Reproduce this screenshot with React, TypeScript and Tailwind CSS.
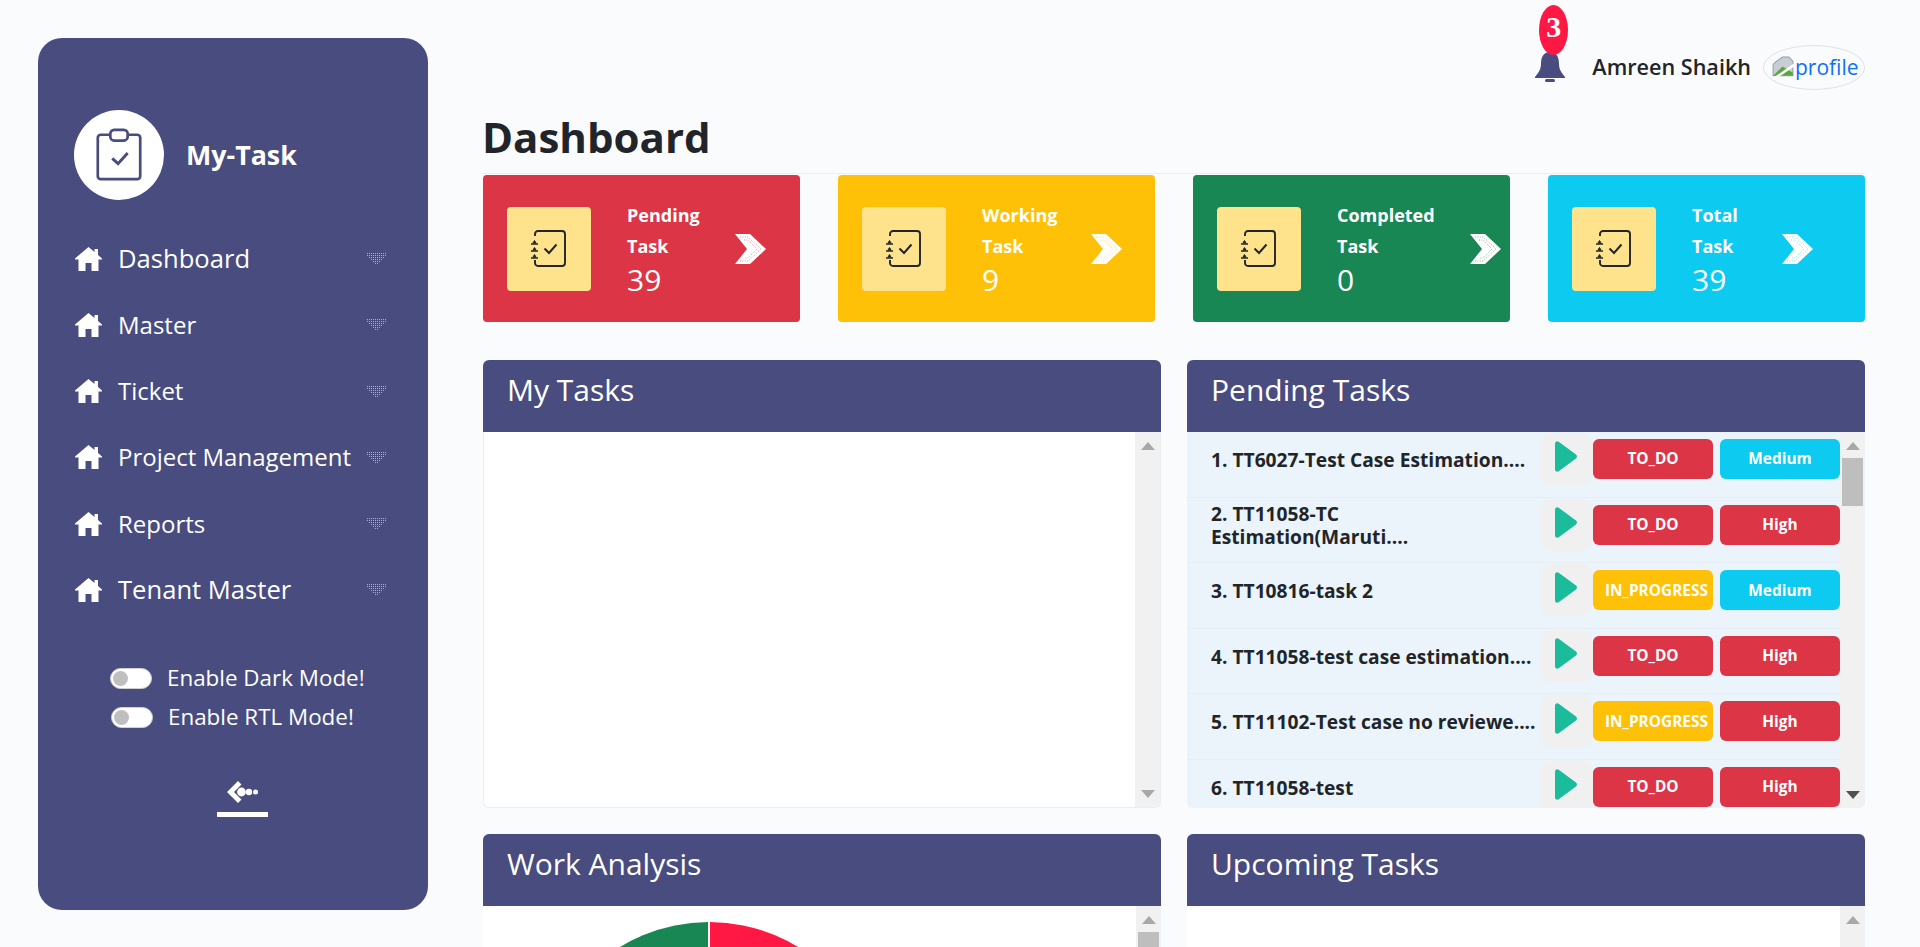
const navItems = [
  { name: 'Dashboard', size: 'text-[25.6px]' },
  { name: 'Master', size: 'text-[24px]' },
  { name: 'Ticket', size: 'text-[24px]' },
  { name: 'Project Management', size: 'text-[24px]' },
  { name: 'Reports', size: 'text-[24px]' },
  { name: 'Tenant Master', size: 'text-[25.6px]' },
]

const statCards = [
  { label: 'Pending', sub: 'Task', count: '39', bg: 'bg-[#dc3545]', hatch: 'text-[#dc3545]', textW: 'w-[108px]' },
  { label: 'Working', sub: 'Task', count: '9', bg: 'bg-[#ffc107]', hatch: 'text-[#ffc107]', textW: 'w-[109px]' },
  { label: 'Completed', sub: 'Task', count: '0', bg: 'bg-[#198754]', hatch: 'text-[#198754]', textW: 'w-[133px]' },
  { label: 'Total', sub: 'Task', count: '39', bg: 'bg-[#0dcaf0]', hatch: 'text-[#0dcaf0]', textW: 'w-[90px]' },
]

const tasks = [
  { title: '1. TT6027-Test Case Estimation....', status: 'TO_DO', priority: 'Medium' },
  { title: '2. TT11058-TC Estimation(Maruti....', status: 'TO_DO', priority: 'High' },
  { title: '3. TT10816-task 2', status: 'IN_PROGRESS', priority: 'Medium' },
  { title: '4. TT11058-test case estimation....', status: 'TO_DO', priority: 'High' },
  { title: '5. TT11102-Test case no reviewe....', status: 'IN_PROGRESS', priority: 'High' },
  { title: '6. TT11058-test', status: 'TO_DO', priority: 'High' },
]

function HomeIcon() {
  return (
    <svg viewBox="0 0 27 24" className="w-[27px] h-[24px] shrink-0" fill="white">
      <path d="M13.5 0 L19.5 5 V2 H23 V8 L27 11.5 V12.5 H23.5 V24 H16.5 V16 H10.5 V24 H3.5 V12.5 H0 V11.5 Z" />
    </svg>
  )
}

function DotCaret() {
  return (
    <svg viewBox="0 0 19 11" className="w-[19px] h-[11px] shrink-0" fill="white" fillOpacity="0.55" shapeRendering="crispEdges">
      {[0, 1, 2, 3, 4, 5].map(row =>
        Array.from({ length: row < 2 ? 10 : 10 - (row - 1) * 2 }).map((_, i) => (
          <rect key={`${row}-${i}`} x={(row < 2 ? 0 : (row - 1) * 2) + i * 2} y={row * 2} width="1" height="1" />
        ))
      )}
    </svg>
  )
}

function Toggle({ label, className }: { label: string; className: string }) {
  return (
    <div className={`flex items-center gap-[15px] ${className}`}>
      <span className="w-[42px] h-[21px] rounded-full bg-white border border-[#d0d0d0] flex items-center pl-[2px]">
        <span className="w-[15px] h-[15px] rounded-full bg-[#bfbfbf]" />
      </span>
      <span className="text-[22.4px] leading-[32px] text-white whitespace-nowrap">{label}</span>
    </div>
  )
}

function Sidebar() {
  return (
    <aside className="w-[390px] h-[872px] shrink-0 rounded-[24px] bg-[#484c7f] pl-[36px] pr-[42px] pt-[72px] flex flex-col">
      <div className="flex items-center gap-[22px]">
        <div className="w-[90px] h-[90px] rounded-full bg-white flex items-center justify-center">
          <svg viewBox="0 0 48 56" className="w-[48px] h-[54px]" fill="none" stroke="#484c7f" strokeWidth="2.8">
            <path d="M14 7 H5 A3 3 0 0 0 2 10 V50 A3 3 0 0 0 5 53 H43 A3 3 0 0 0 46 50 V10 A3 3 0 0 0 43 7 H34" />
            <rect x="15" y="2" width="18" height="11" rx="4" />
            <path d="M17 31.5 L23 37 L33 26" strokeWidth="3" />
          </svg>
        </div>
        <span className="text-[26.8px] font-bold text-white">My-Task</span>
      </div>

      <nav className="mt-[25.7px] flex flex-col">
        {navItems.map(item => (
          <div key={item.name} className="h-[66.2px] flex items-center gap-[16px] pl-[1px]">
            <HomeIcon />
            <span className={`${item.size} text-white flex-1 whitespace-nowrap`}>{item.name}</span>
            <DotCaret />
          </div>
        ))}
      </nav>

      <div className="mt-[36px] flex flex-col">
        <Toggle label="Enable Dark Mode!" className="ml-[36px] h-[39px]" />
        <Toggle label="Enable RTL Mode!" className="ml-[37px] h-[39px]" />
      </div>

      <div className="mt-[44px] ml-[143px] w-[51px] flex flex-col items-center">
        <svg viewBox="0 0 32 22" className="w-[32px] h-[22px]" fill="white">
          <path d="M11 0 L14.5 3.5 L7 11 L14.5 18.5 L11 22 L0 11 Z" />
          <circle cx="14.5" cy="11" r="4.4" />
          <circle cx="22" cy="11" r="3.2" />
          <circle cx="28.5" cy="11" r="2.5" />
        </svg>
        <div className="w-[51px] h-[5px] bg-white mt-[9px]" />
      </div>
    </aside>
  )
}

function TopBar() {
  return (
    <div className="h-[110px] flex justify-end items-start">
      <div className="relative w-[30px] h-[30px] mt-[52px] mr-[27px]">
        <svg viewBox="0 0 30 30" className="w-[30px] h-[30px]" fill="#484c7f">
          <path d="M15 0 C22 0 24 6 24 12 C24 18 27 21 30 25 V26 H0 V25 C3 21 6 18 6 12 C6 6 8 0 15 0 Z" />
          <rect x="10" y="27" width="10" height="3" rx="1.5" />
        </svg>
        <span className="absolute -top-[47px] left-[4px] w-[29px] h-[50px] pb-[6px] rounded-[50%] bg-[#ff1843] flex items-center justify-center text-white font-bold text-[30px] leading-none font-['Liberation_Serif',serif]">
          3
        </span>
      </div>
      <span className="text-[21.6px] font-semibold text-[#212529] mt-[47px] leading-[40px] whitespace-nowrap">Amreen Shaikh</span>
      <div className="ml-[12px] mt-[45px] w-[102px] h-[45px] rounded-[50%] border border-[#dfe3e8] flex items-center pl-[6px] overflow-hidden">
        <svg viewBox="0 0 24 24" className="w-[25px] h-[25px] shrink-0">
          <path d="M5 7 L12 2 H18 L22 6 V20 H3 V9 Z" fill="#c8ced6" stroke="#9aa0a6" strokeWidth="1" />
          <path d="M3 20 L12 11 L22 17 V20 Z" fill="#57a83b" />
          <path d="M2 24 L24 9" stroke="white" strokeWidth="2.5" />
        </svg>
        <span className="text-[21px] text-[#0d6efd] leading-none whitespace-nowrap">profile</span>
      </div>
    </div>
  )
}

function NotebookIcon() {
  return (
    <svg viewBox="0 0 35 37" className="w-[35px] h-[37px] -ml-[2px]" fill="none" stroke="#212529" strokeWidth="1.9">
      <path d="M4 6 V4 A3 3 0 0 1 7 1 H31 A3 3 0 0 1 34 4 V33 A3 3 0 0 1 31 36 H7 A3 3 0 0 1 4 33 V30" />
      <path d="M0 14 H7 M0 21 H7 M0 28 H7" strokeWidth="1.6" />
      <path d="M2 13 L3.5 10.5 L5 13 Z M2 20 L3.5 17.5 L5 20 Z M2 27 L3.5 24.5 L5 27 Z" fill="#212529" strokeWidth="1" />
      <path d="M13.5 18.5 L18 23 L25.5 14.5" strokeWidth="2" />
    </svg>
  )
}

function Chevron({ hatch }: { hatch: string }) {
  return (
    <svg viewBox="0 0 31 30" className={`w-[31px] h-[30px] shrink-0 ${hatch}`}>
      <path d="M0 0 H15 L31 15 L15 30 H0 L12 15 Z" fill="white" />
      <path d="M5 3 H13 L26 15 L13 27 H5 M9 6 H13 L22 15 L13 24 H9" fill="none" stroke="currentColor" strokeOpacity="0.7" strokeWidth="0.8" strokeDasharray="1 1.4" />
    </svg>
  )
}

function StatCard({ label, sub, count, bg, hatch, textW }: (typeof statCards)[number]) {
  return (
    <div className={`h-[147px] rounded-[4px] ${bg} pl-[24px] flex items-center`}>
      <div className="w-[84px] h-[84px] rounded-[4px] bg-[#ffe28c] flex items-center justify-center shrink-0">
        <NotebookIcon />
      </div>
      <div className={`ml-[36px] ${textW} text-white shrink-0`}>
        <div className="text-[18px] font-bold leading-[31px]">{label}</div>
        <div className="text-[18px] font-bold leading-[31px]">{sub}</div>
        <div className="text-[30px] leading-[36px]">{count}</div>
      </div>
      <Chevron hatch={hatch} />
    </div>
  )
}

function ScrollTrack({ thumb, down, downColor }: { thumb?: boolean; down?: boolean; downColor?: string }) {
  return (
    <div className="w-[25px] shrink-0 bg-[#f1f1f1] flex flex-col items-center">
      <svg viewBox="0 0 14 8" className="w-[14px] h-[8px] mt-[10px] shrink-0" fill="#a8a8a8">
        <path d="M7 0 L14 8 H0 Z" />
      </svg>
      {thumb && <div className="w-[21px] h-[48px] bg-[#bebebe] mt-[8px] shrink-0" />}
      <div className="flex-1" />
      {down && (
        <svg viewBox="0 0 14 8" className="w-[14px] h-[8px] mb-[9px] shrink-0" fill={downColor ?? '#a8a8a8'}>
          <path d="M0 0 H14 L7 8 Z" />
        </svg>
      )}
    </div>
  )
}

function PanelHead({ title }: { title: string }) {
  return (
    <div className="h-[72px] rounded-t-[6px] bg-[#484c7f] px-[24px] pt-[12px]">
      <h2 className="text-[30px] leading-[36px] text-white">{title}</h2>
    </div>
  )
}

function Badge({ text }: { text: string }) {
  const color =
    text === 'IN_PROGRESS' ? 'bg-[#ffc107] pl-[12px] justify-start' :
    text === 'Medium' ? 'bg-[#0dcaf0] justify-center' :
    'bg-[#dc3545] justify-center'
  return (
    <span className={`w-[120px] h-[40px] rounded-[6px] flex items-center text-white text-[15.4px] font-bold whitespace-nowrap ${color}`}>
      {text}
    </span>
  )
}

function TaskRow({ title, status, priority }: (typeof tasks)[number]) {
  return (
    <div className="h-[65.6px] shrink-0 flex items-center border-b border-[#e6edf3]">
      <div className="w-[353px] pl-[24px] pr-[3px] pb-[10px] text-[19.2px] leading-[23px] font-bold text-[#212529]">{title}</div>
      <div className="w-[53px] h-[52px] rounded-[12px] bg-[#f0f0f0] flex items-start justify-center pt-[8px] self-start mt-[1px]">
        <svg viewBox="0 0 23 31" className="w-[23px] h-[31px] -ml-[3px]" fill="#1abc9c">
          <path d="M1 3 C1 0.5 3 -0.5 5 1 L22 13.5 C23.3 14.6 23.3 16.4 22 17.5 L5 30 C3 31.5 1 30.5 1 28 Z" />
        </svg>
      </div>
      <div className="flex gap-[7px] self-start mt-[7px]">
        <Badge text={status} />
        <Badge text={priority} />
      </div>
    </div>
  )
}

export default function App() {
  return (
    <div className="h-[947px] overflow-hidden bg-[#fafbfd] pl-[38px] pt-[38px] flex font-['Open_Sans',sans-serif]">
      <Sidebar />

      <main className="w-[1382px] ml-[55px] -mt-[38px] shrink-0">
        <TopBar />
        <h1 className="text-[42px] leading-[54px] font-bold text-[#212529] -ml-[1px]">Dashboard</h1>
        <div className="border-t border-[#eceef2] mt-[9px] mb-[1px]" />
        <div className="grid grid-cols-4 gap-x-[38px]">
          {statCards.map(card => (
            <StatCard key={card.label} {...card} />
          ))}
        </div>

        <div className="grid grid-cols-[678px_678px] gap-[26px] mt-[38px]">
          <section>
            <PanelHead title="My Tasks" />
            <div className="h-[376px] flex bg-white rounded-b-[6px] border-x border-b border-[#eceef2]">
              <div className="flex-1" />
              <ScrollTrack down />
            </div>
          </section>

          <section>
            <PanelHead title="Pending Tasks" />
            <div className="h-[376px] flex bg-[#ebf4fb] rounded-b-[6px] overflow-hidden">
              <div className="flex-1 flex flex-col overflow-hidden">
                {tasks.map(task => (
                  <TaskRow key={task.title} {...task} />
                ))}
              </div>
              <ScrollTrack thumb down downColor="#505050" />
            </div>
          </section>

          <section>
            <PanelHead title="Work Analysis" />
            <div className="h-[300px] flex bg-white">
              <div className="flex-1 pt-[16px] pl-[55px]">
                <svg viewBox="0 0 342 342" className="w-[342px] h-[342px]">
                  <path d="M170 0 A171 171 0 0 0 0 171 H170 Z" fill="#198754" />
                  <path d="M172 0 A171 171 0 0 1 342 171 H172 Z" fill="#ff1843" />
                </svg>
              </div>
              <ScrollTrack thumb />
            </div>
          </section>

          <section>
            <PanelHead title="Upcoming Tasks" />
            <div className="h-[300px] flex bg-white">
              <div className="flex-1" />
              <ScrollTrack />
            </div>
          </section>
        </div>
      </main>
    </div>
  )
}
